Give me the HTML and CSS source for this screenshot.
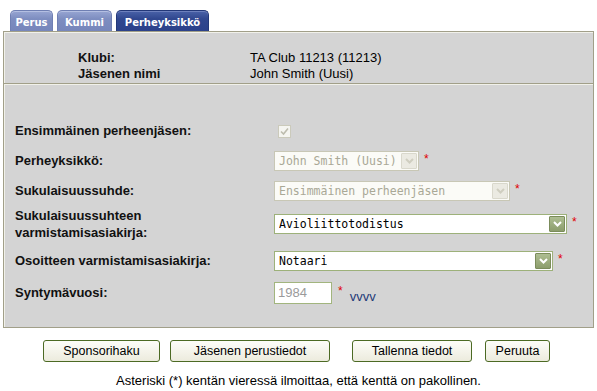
FILE: index.html
```html
<!DOCTYPE html>
<html>
<head>
<meta charset="utf-8">
<link rel="stylesheet" href="styles.css">
</head>
<body>
<div class="tabs">
  <div class="tab tab-perus">Perus</div>
  <div class="tab tab-kummi">Kummi</div>
  <div class="tab tab-active">Perheyksikkö</div>
</div>
<div class="panel">
  <div class="info">
    <div class="info-label">Klubi:</div><div class="info-value">TA Club 11213 (11213)</div>
    <div class="info-label">Jäsenen nimi</div><div class="info-value">John Smith (Uusi)</div>
  </div>
  <div class="form">
    <div class="label">Ensimmäinen perheenjäsen:</div>
    <div class="control"><span class="checkbox"><svg width="9" height="9" viewBox="0 0 9 9"><path d="M1 4.5 L3.5 7 L8 1.5" fill="none" stroke="#bdbcae" stroke-width="1.6"/></svg></span></div>

    <div class="label">Perheyksikkö:</div>
    <div class="control"><div class="select disabled w1"><span class="sel-text">John Smith (Uusi)</span><span class="arrow"><svg width="9" height="6" viewBox="0 0 9 6"><path d="M1 1 L4.5 4.5 L8 1" fill="none" stroke="currentColor" stroke-width="2"/></svg></span></div><span class="req">*</span></div>

    <div class="label">Sukulaisuussuhde:</div>
    <div class="control"><div class="select disabled w2"><span class="sel-text">Ensimmäinen perheenjäsen</span><span class="arrow"><svg width="9" height="6" viewBox="0 0 9 6"><path d="M1 1 L4.5 4.5 L8 1" fill="none" stroke="currentColor" stroke-width="2"/></svg></span></div><span class="req">*</span></div>

    <div class="label label-two">Sukulaisuussuhteen<br>varmistamisasiakirja:</div>
    <div class="control"><div class="select enabled w3"><span class="sel-text">Avioliittotodistus</span><span class="arrow"><svg width="9" height="6" viewBox="0 0 9 6"><path d="M1 1 L4.5 4.5 L8 1" fill="none" stroke="currentColor" stroke-width="2"/></svg></span></div><span class="req">*</span></div>

    <div class="label">Osoitteen varmistamisasiakirja:</div>
    <div class="control"><div class="select enabled w4"><span class="sel-text">Notaari</span><span class="arrow"><svg width="9" height="6" viewBox="0 0 9 6"><path d="M1 1 L4.5 4.5 L8 1" fill="none" stroke="currentColor" stroke-width="2"/></svg></span></div><span class="req">*</span></div>

    <div class="label">Syntymävuosi:</div>
    <div class="control"><div class="textbox">1984</div><span class="req req-wide">*</span><span class="hint">vvvv</span></div>
  </div>
</div>
<div class="buttons">
  <button class="btn btn-1">Sponsorihaku</button>
  <button class="btn btn-2">Jäsenen perustiedot</button>
  <button class="btn btn-3">Tallenna tiedot</button>
  <button class="btn btn-4">Peruuta</button>
</div>
<p class="note">Asteriski (*) kentän vieressä ilmoittaa, että kenttä on pakollinen.</p>
</body>
</html>
```

FILE: styles.css
```css
* { box-sizing: border-box; }
body {
  margin: 0;
  background: #ffffff;
  font-family: "Liberation Sans", Arial, sans-serif;
  color: #000;
}
.tabs {
  display: flex;
  gap: 4px;
  padding: 10px 0 0 10px;
}
.tab {
  height: 21px;
  display: flex;
  align-items: center;
  justify-content: center;
  padding-top: 2px;
  border-radius: 5px 5px 0 0;
  font: bold 10px "DejaVu Sans", Verdana, sans-serif;
  color: #ffffff;
  background: linear-gradient(#97a5d2, #7d8dc0 40%, #7686bb);
  border: 1px solid #6f7fb3;
  border-bottom: none;
  box-shadow: inset 0 1px 0 #b4bfe2;
}
.tab-perus { width: 43px; }
.tab-kummi { width: 55px; }
.tab-active {
  width: 93px;
  background: linear-gradient(#4a62a8, #30478f 40%, #2b418a);
  border-color: #233878;
  box-shadow: inset 0 1px 0 #6d80bd;
}
.panel {
  margin-left: 3px;
  width: 591px;
  background: #d4d4d4;
  border: 1px solid #a19f89;
  box-shadow: inset 1px 1px 0 #f1f1ea;
}
.info {
  display: grid;
  grid-template-columns: 172px auto;
  padding: 18px 0 1px 74px;
  font-size: 13px;
  line-height: 16px;
}
.info-label { font-weight: bold; color: #111; }
.form {
  border-top: 1px solid #a19f89;
  box-shadow: inset 0 1px 0 #f1f1ea;
  display: grid;
  grid-template-columns: 259px auto;
  grid-template-rows: 30px 30px 30px 36px 38px 26px;
  align-items: center;
  padding: 32px 0 21px 11px;
}
.label {
  font-size: 13px;
  font-weight: bold;
  line-height: 16px;
  color: #111;
}
.label-two { line-height: 17px; }
.control {
  display: flex;
  align-items: center;
}
.checkbox {
  width: 13px;
  height: 13px;
  margin-left: 4px;
  border: 1px solid #cbcabb;
  background: #f5f5f1;
  display: flex;
  align-items: center;
  justify-content: center;
}
.select {
  height: 20px;
  display: flex;
  align-items: center;
  justify-content: space-between;
  border: 1px solid;
  padding: 1px 1px 1px 4px;
  font-family: "DejaVu Sans Mono", "Liberation Mono", monospace;
  font-size: 11.5px;
}
.w1 { width: 145px; }
.w2 { width: 236px; }
.w3 { width: 293px; }
.w4 { width: 279px; }
.sel-text { white-space: nowrap; overflow: hidden; }
.arrow {
  width: 16px;
  height: 16px;
  flex: none;
  display: flex;
  align-items: center;
  justify-content: center;
  border: 1px solid;
  border-radius: 1px;
}
.disabled {
  border-color: #c8c7b5;
  background: #fbfbf7;
  color: #a9a896;
}
.disabled .arrow {
  background: #ebeae2;
  border-color: #d9d8cc;
  color: #cfcec0;
}
.enabled {
  border-color: #9db17a;
  background: #ffffff;
  color: #000;
}
.enabled .arrow {
  background: linear-gradient(#aebe92, #8c9d6c);
  border-color: #7b8c5b;
  color: #ffffff;
}
.req {
  color: #e00000;
  font-size: 12px;
  margin-left: 5px;
  margin-top: -4px;
}
.req-wide { margin-left: 6px; }
.textbox {
  width: 58px;
  height: 22px;
  border: 1px solid #a2b57e;
  background: #ffffff;
  color: #9a9a9a;
  font-size: 13px;
  line-height: 20px;
  padding-left: 3px;
}
.hint {
  margin-left: 7px;
  margin-top: 6px;
  font-size: 13px;
  color: #1f3a78;
}
.buttons {
  display: flex;
  padding-left: 43px;
  margin-top: 12px;
}
.btn {
  height: 22px;
  border: 1px solid #4c6a24;
  border-radius: 3px;
  background: linear-gradient(#fdfdf9, #ecebdd);
  font-family: "Liberation Sans", Arial, sans-serif;
  font-size: 12.5px;
  color: #000;
  padding: 0;
}
.btn-1 { width: 117px; }
.btn-2 { width: 160px; margin-left: 10px; }
.btn-3 { width: 120px; margin-left: 22px; }
.btn-4 { width: 65px; margin-left: 13px; }
.note {
  margin: 11px 0 0;
  text-align: center;
  font-size: 13px;
  line-height: 16px;
}
```
